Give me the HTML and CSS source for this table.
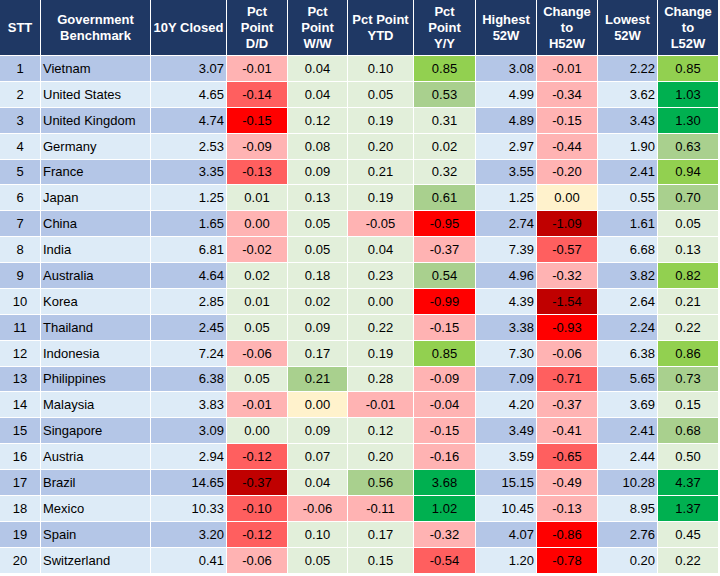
FILE: index.html
```html
<!DOCTYPE html>
<html>
<head>
<meta charset="utf-8">
<link rel="stylesheet" href="styles.css">
</head>
<body>
<table class="grid">
<colgroup>
<col class="w41"><col class="w110"><col class="w76"><col class="w61"><col class="w60"><col class="w66"><col class="w62"><col class="w61"><col class="w61"><col class="w60"><col class="w61">
</colgroup>
<thead>
<tr class="hd">
<th>STT</th><th>Government<br>Benchmark</th><th>10Y Closed</th><th>Pct<br>Point<br>D/D</th><th>Pct<br>Point<br>W/W</th><th>Pct Point<br>YTD</th><th>Pct<br>Point<br>Y/Y</th><th>Highest<br>52W</th><th>Change<br>to<br>H52W</th><th>Lowest<br>52W</th><th>Change<br>to<br>L52W</th>
</tr>
</thead>
<tbody>
<tr><td class="b s">1</td><td class="b nm">Vietnam</td><td class="b n">3.07</td><td class="c p1">-0.01</td><td class="c">0.04</td><td class="c">0.10</td><td class="c g2">0.85</td><td class="b n">3.08</td><td class="c p1">-0.01</td><td class="b n">2.22</td><td class="c g2">0.85</td></tr>
<tr><td class="b s">2</td><td class="b nm">United States</td><td class="b n">4.65</td><td class="c p2">-0.14</td><td class="c">0.04</td><td class="c">0.05</td><td class="c g1">0.53</td><td class="b n">4.99</td><td class="c p1">-0.34</td><td class="b n">3.62</td><td class="c g3">1.03</td></tr>
<tr><td class="b s">3</td><td class="b nm">United Kingdom</td><td class="b n">4.74</td><td class="c p3">-0.15</td><td class="c">0.12</td><td class="c">0.19</td><td class="c">0.31</td><td class="b n">4.89</td><td class="c p1">-0.15</td><td class="b n">3.43</td><td class="c g3">1.30</td></tr>
<tr><td class="b s">4</td><td class="b nm">Germany</td><td class="b n">2.53</td><td class="c p1">-0.09</td><td class="c">0.08</td><td class="c">0.20</td><td class="c">0.02</td><td class="b n">2.97</td><td class="c p1">-0.44</td><td class="b n">1.90</td><td class="c g1">0.63</td></tr>
<tr><td class="b s">5</td><td class="b nm">France</td><td class="b n">3.35</td><td class="c p2">-0.13</td><td class="c">0.09</td><td class="c">0.21</td><td class="c">0.32</td><td class="b n">3.55</td><td class="c p1">-0.20</td><td class="b n">2.41</td><td class="c g2">0.94</td></tr>
<tr><td class="b s">6</td><td class="b nm">Japan</td><td class="b n">1.25</td><td class="c">0.01</td><td class="c">0.13</td><td class="c">0.19</td><td class="c g1">0.61</td><td class="b n">1.25</td><td class="c y">0.00</td><td class="b n">0.55</td><td class="c g1">0.70</td></tr>
<tr><td class="b s">7</td><td class="b nm">China</td><td class="b n">1.65</td><td class="c p1">0.00</td><td class="c">0.05</td><td class="c p1">-0.05</td><td class="c p3">-0.95</td><td class="b n">2.74</td><td class="c p4">-1.09</td><td class="b n">1.61</td><td class="c">0.05</td></tr>
<tr><td class="b s">8</td><td class="b nm">India</td><td class="b n">6.81</td><td class="c p1">-0.02</td><td class="c">0.05</td><td class="c">0.04</td><td class="c p1">-0.37</td><td class="b n">7.39</td><td class="c p2">-0.57</td><td class="b n">6.68</td><td class="c">0.13</td></tr>
<tr><td class="b s">9</td><td class="b nm">Australia</td><td class="b n">4.64</td><td class="c">0.02</td><td class="c">0.18</td><td class="c">0.23</td><td class="c g1">0.54</td><td class="b n">4.96</td><td class="c p1">-0.32</td><td class="b n">3.82</td><td class="c g2">0.82</td></tr>
<tr><td class="b s">10</td><td class="b nm">Korea</td><td class="b n">2.85</td><td class="c">0.01</td><td class="c">0.02</td><td class="c">0.00</td><td class="c p3">-0.99</td><td class="b n">4.39</td><td class="c p4">-1.54</td><td class="b n">2.64</td><td class="c">0.21</td></tr>
<tr><td class="b s">11</td><td class="b nm">Thailand</td><td class="b n">2.45</td><td class="c">0.05</td><td class="c">0.09</td><td class="c">0.22</td><td class="c p1">-0.15</td><td class="b n">3.38</td><td class="c p3">-0.93</td><td class="b n">2.24</td><td class="c">0.22</td></tr>
<tr><td class="b s">12</td><td class="b nm">Indonesia</td><td class="b n">7.24</td><td class="c p1">-0.06</td><td class="c">0.17</td><td class="c">0.19</td><td class="c g2">0.85</td><td class="b n">7.30</td><td class="c p1">-0.06</td><td class="b n">6.38</td><td class="c g2">0.86</td></tr>
<tr><td class="b s">13</td><td class="b nm">Philippines</td><td class="b n">6.38</td><td class="c">0.05</td><td class="c g1">0.21</td><td class="c">0.28</td><td class="c p1">-0.09</td><td class="b n">7.09</td><td class="c p2">-0.71</td><td class="b n">5.65</td><td class="c g1">0.73</td></tr>
<tr><td class="b s">14</td><td class="b nm">Malaysia</td><td class="b n">3.83</td><td class="c p1">-0.01</td><td class="c y">0.00</td><td class="c p1">-0.01</td><td class="c p1">-0.04</td><td class="b n">4.20</td><td class="c p1">-0.37</td><td class="b n">3.69</td><td class="c">0.15</td></tr>
<tr><td class="b s">15</td><td class="b nm">Singapore</td><td class="b n">3.09</td><td class="c">0.00</td><td class="c">0.09</td><td class="c">0.12</td><td class="c p1">-0.15</td><td class="b n">3.49</td><td class="c p1">-0.41</td><td class="b n">2.41</td><td class="c g1">0.68</td></tr>
<tr><td class="b s">16</td><td class="b nm">Austria</td><td class="b n">2.94</td><td class="c p2">-0.12</td><td class="c">0.07</td><td class="c">0.20</td><td class="c p1">-0.16</td><td class="b n">3.59</td><td class="c p2">-0.65</td><td class="b n">2.44</td><td class="c">0.50</td></tr>
<tr><td class="b s">17</td><td class="b nm">Brazil</td><td class="b n">14.65</td><td class="c p4">-0.37</td><td class="c">0.04</td><td class="c g1">0.56</td><td class="c g3">3.68</td><td class="b n">15.15</td><td class="c p1">-0.49</td><td class="b n">10.28</td><td class="c g3">4.37</td></tr>
<tr><td class="b s">18</td><td class="b nm">Mexico</td><td class="b n">10.33</td><td class="c p2">-0.10</td><td class="c p1">-0.06</td><td class="c p1">-0.11</td><td class="c g3">1.02</td><td class="b n">10.45</td><td class="c p1">-0.13</td><td class="b n">8.95</td><td class="c g3">1.37</td></tr>
<tr><td class="b s">19</td><td class="b nm">Spain</td><td class="b n">3.20</td><td class="c p2">-0.12</td><td class="c">0.10</td><td class="c">0.17</td><td class="c p1">-0.32</td><td class="b n">4.07</td><td class="c p3">-0.86</td><td class="b n">2.76</td><td class="c">0.45</td></tr>
<tr><td class="b s">20</td><td class="b nm">Switzerland</td><td class="b n">0.41</td><td class="c p1">-0.06</td><td class="c">0.05</td><td class="c">0.15</td><td class="c p2">-0.54</td><td class="b n">1.20</td><td class="c p3">-0.78</td><td class="b n">0.20</td><td class="c">0.22</td></tr>
</tbody>
</table>
</body>
</html>
```
FILE: styles.css
```css
html, body {
  margin: 0;
  padding: 0;
  background: #ffffff;
}
body {
  font-family: "Liberation Sans", Arial, sans-serif;
  font-size: 13px;
  color: #000000;
}
.grid {
  border-collapse: separate;
  border-spacing: 0;
  table-layout: fixed;
  width: 719px;
}
.w41 { width: 41px; }
.w110 { width: 110px; }
.w76 { width: 76px; }
.w61 { width: 61px; }
.w60 { width: 60px; }
.w66 { width: 66px; }
.w62 { width: 62px; }
.grid th,
.grid td {
  border-right: 1px solid #ffffff;
  border-bottom: 1px solid #ffffff;
  padding: 0;
  white-space: nowrap;
  overflow: hidden;
}
.grid th {
  background: #1f3864;
  color: #ffffff;
  font-weight: bold;
  line-height: 16px;
  text-align: center;
  vertical-align: middle;
  height: 54px;
  padding-top: 1px;
}
.grid td {
  height: 24.88px;
  line-height: 15px;
  vertical-align: middle;
}
.grid tbody tr:nth-child(odd) td.b { background: #b4c6e7; }
.grid tbody tr:nth-child(even) td.b { background: #ddebf7; }
.s { text-align: center; }
.nm { text-align: left; padding-left: 2px !important; }
.n { text-align: right; padding-right: 2px !important; }
.c { text-align: center; background: #e2efda; }
.c.p1 { background: #ffb3b3; }
.c.p2 { background: #ff5f5f; }
.c.p3 { background: #ff0000; }
.c.p4 { background: #c00000; }
.c.g1 { background: #a9d08e; }
.c.g2 { background: #92d050; }
.c.g3 { background: #00b050; }
.c.y { background: #fff2cc; }
```
